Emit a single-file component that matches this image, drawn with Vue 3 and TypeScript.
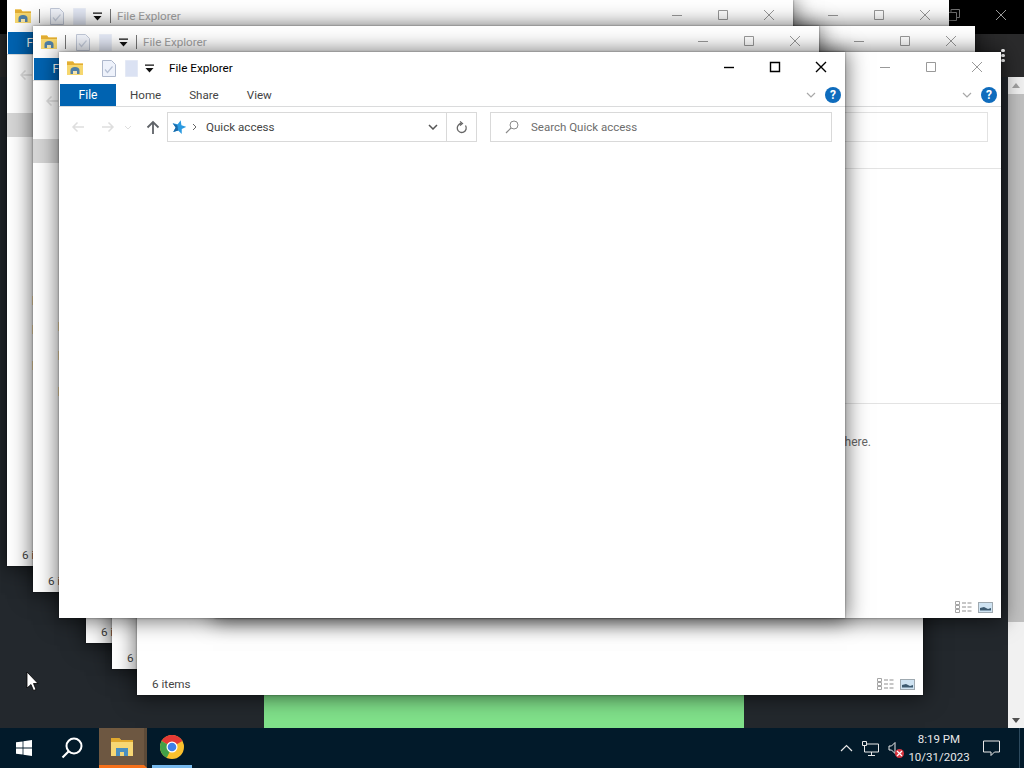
<script setup lang="ts">
type WindowBody = 'blank' | 'folders' | 'pinned'

interface ExplorerWindow {
  id: number
  x: number
  y: number
  body: WindowBody
  active?: boolean
}

// back to front, same order the cascade was opened in
const windows: ExplorerWindow[] = [
  { id: 1, x: 86, y: 77, body: 'blank' },
  { id: 2, x: 112, y: 103, body: 'blank' },
  { id: 3, x: 137, y: 129, body: 'blank' },
  { id: 4, x: 163, y: 0, body: 'pinned' },
  { id: 5, x: 189, y: 26, body: 'pinned' },
  { id: 6, x: 215, y: 52, body: 'pinned' },
  { id: 7, x: 7, y: 0, body: 'folders' },
  { id: 8, x: 33, y: 26, body: 'folders' },
  { id: 9, x: 59, y: 52, body: 'blank', active: true }
]

const tabs = ['Home', 'Share', 'View']
const folderRows = ['Desktop', 'Downloads', 'Documents']
</script>

<template>
  <div class="desktop">
    <div class="browser">
      <div class="browser-tabs">
        <svg class="browser-btn" width="14" height="14" viewBox="0 0 14 14">
          <path d="M1.5 4.5h8v8h-8zM4 4.5V1.5h8.5v8h-3" fill="none" stroke="#8a8a8a" />
        </svg>
        <svg class="browser-btn browser-close" width="14" height="14" viewBox="0 0 14 14">
          <path d="M2 2l10 10M12 2L2 12" fill="none" stroke="#9a9a9a" />
        </svg>
      </div>
      <div class="browser-toolbar">
        <div class="kebab"><i></i><i></i><i></i></div>
      </div>
      <div class="browser-page">
        <div class="green-block"></div>
        <div class="scrollbar">
          <span class="scroll-up"></span>
          <span class="scroll-thumb"></span>
          <span class="scroll-down"></span>
        </div>
      </div>
    </div>

    <!-- explorer windows -->
    <div
      v-for="win in windows"
      :key="win.id"
      class="window"
      :class="{ 'window-active': win.active }"
      :style="{ left: win.x + 'px', top: win.y + 'px' }"
    >
      <div class="titlebar">
        <svg class="home-folder" width="16" height="16" viewBox="0 0 16 16">
          <path d="M0 1.5h6l1.5 2H16V15H0z" fill="#f6d76f" />
          <path d="M0 1.5h6l1.5 2H16v1.5H0z" fill="#e3ae33" />
          <path d="M3.5 14V10.5a4.5 3.5 0 0 1 9 0V14h-2.5v-3h-4v3z" fill="#4f7fa6" />
          <path d="M6 11h4v3H6z" fill="#f3e3ae" />
        </svg>
        <span class="qa-sep qa-sep-first"></span>
        <svg class="qa-doc" width="14" height="17" viewBox="0 0 14 17">
          <path d="M.5.5h9l4 4v12H.5z" fill="#eef2fb" stroke="#aeb8cc" />
          <path d="M3 9.5l2.5 3 5-6" fill="none" stroke="#b6c0d4" stroke-width="1.2" />
        </svg>
        <svg class="qa-page" width="13" height="17" viewBox="0 0 13 17">
          <path d="M.5.5h12v16H.5z" fill="#dbe2f3" stroke="#e4e9f5" />
        </svg>
        <svg class="qa-drop" width="9" height="9" viewBox="0 0 9 9">
          <path d="M0 .5h9v1.2H0zM.5 4h8L4.5 8.5z" fill="#111" />
        </svg>
        <span class="qa-sep qa-sep-last"></span>
        <span class="title">File Explorer</span>
        <div class="controls">
          <span class="control">
            <svg width="12" height="12" viewBox="0 0 12 12"><path d="M1 6.5h10" /></svg>
          </span>
          <span class="control">
            <svg width="12" height="12" viewBox="0 0 12 12"><path d="M1.5 1.5h9v9h-9z" /></svg>
          </span>
          <span class="control">
            <svg width="12" height="12" viewBox="0 0 12 12"><path d="M1 1l10 10M11 1L1 11" /></svg>
          </span>
        </div>
      </div>

      <div class="ribbon">
        <span class="tab-file">File</span>
        <span v-for="tab in tabs" :key="tab" class="tab">{{ tab }}</span>
        <svg class="ribbon-chevron" width="10" height="6" viewBox="0 0 10 6">
          <path d="M1 1l4 4 4-4" fill="none" stroke="#a8a8a8" stroke-width="1.2" />
        </svg>
        <span class="help">?</span>
      </div>

      <div class="navbar">
        <svg class="nav-btn nav-back" width="14" height="12" viewBox="0 0 14 12">
          <path d="M13 6H2M6.5 1.5L2 6l4.5 4.5" fill="none" stroke="#dedede" stroke-width="1.5" />
        </svg>
        <svg class="nav-btn nav-forward" width="14" height="12" viewBox="0 0 14 12">
          <path d="M1 6h11M7.5 1.5L12 6l-4.5 4.5" fill="none" stroke="#dedede" stroke-width="1.5" />
        </svg>
        <svg class="nav-btn nav-caret" width="8" height="5" viewBox="0 0 8 5">
          <path d="M1 1l3 3 3-3" fill="none" stroke="#dedede" />
        </svg>
        <svg class="nav-btn nav-up" width="14" height="14" viewBox="0 0 14 14">
          <path d="M7 14V2M1.5 7.5L7 2l5.5 5.5" fill="none" stroke="#5f6368" stroke-width="1.8" />
        </svg>
        <div class="address">
          <svg class="star" width="14" height="14" viewBox="0 0 16 16">
            <g transform="rotate(14 8 8)">
              <path d="M8 0l2.200 5.300 5.800.4-4.400 3.700 1.400 5.600L8 12l-5 3 1.400-5.600L0 5.700l5.800-.4z" fill="#2b9ae0" />
              <path d="M8 12l-5 3 1.400-5.600L0 5.700l5.800 1z" fill="#1b6aa8" />
            </g>
          </svg>
          <svg class="crumb" width="5" height="8" viewBox="0 0 5 8">
            <path d="M1 1l3 3-3 3" fill="none" stroke="#666" />
          </svg>
          <span class="address-text">Quick access</span>
          <svg class="address-drop" width="10" height="6" viewBox="0 0 10 6">
            <path d="M1 1l4 4 4-4" fill="none" stroke="#555" stroke-width="1.5" />
          </svg>
        </div>
        <div class="refresh">
          <svg width="12" height="13" viewBox="0 0 12 13">
            <path d="M9.500 4.500A4.500 4.500 0 1 1 5.500 2.500" fill="none" stroke="#666" stroke-width="1.300" />
            <path d="M4 .5L6.500 2.500 4 4.500" fill="none" stroke="#666" stroke-width="1.200" />
          </svg>
        </div>
        <div class="search">
          <svg width="14" height="14" viewBox="0 0 14 14">
            <circle cx="9" cy="5" r="4" fill="none" stroke="#8a8a8a" />
            <path d="M6 8l-5 5" stroke="#8a8a8a" stroke-width="1.200" />
          </svg>
          <span class="search-text">Search Quick access</span>
        </div>
      </div>

      <div class="body">
        <template v-if="win.body === 'folders'">
          <div class="grey-row"></div>
          <div class="folder-list">
            <span v-for="row in folderRows" :key="row" class="folder-row">{{ row }}</span>
          </div>
        </template>
        <template v-else-if="win.body === 'pinned'">
          <div class="rule rule-top"></div>
          <div class="rule rule-bottom"></div>
          <p class="pinned-note">After you've pinned some folders, we'll show the most recent ones here.</p>
        </template>
      </div>

      <!-- the focused window has not painted its status bar yet -->
      <div class="statusbar">
        <template v-if="!win.active">
          <span class="status-text">6 items</span>
          <svg class="status-details" width="17" height="12" viewBox="0 0 17 12">
            <path d="M.5.5h4v3h-4zM.5 4.500h4v3h-4zM.5 8.500h4v3h-4z" fill="#fff" stroke="#a5a5a5" />
            <path d="M7 2h4M12.500 2h4M7 6h4M12.500 6h4M7 10h4M12.500 10h4" stroke="#8f8f8f" />
          </svg>
          <svg class="status-thumbs" width="15" height="11" viewBox="0 0 15 11">
            <rect x=".5" y=".5" width="14" height="10" fill="#cfe3f2" stroke="#9fa9b0" />
            <path d="M2 8.500V6l4-1 4 2 3-1v2.500z" fill="#3d5a70" />
          </svg>
        </template>
      </div>
    </div>

    <!-- mouse pointer -->
    <svg class="pointer" width="13" height="21" viewBox="0 0 13 21">
      <path d="M1 1v16l4-3.500 2.500 6 2.500-1-2.500-6H12z" fill="#fff" stroke="#000" stroke-width=".8" />
    </svg>

    <div class="taskbar">
      <div class="task-start">
        <svg width="16" height="16" viewBox="0 0 16 16">
          <path d="M0 2.300l6.600-.9v6.200H0zM7.400 1.300L16 0v7.600H7.400zM0 8.400h6.600v6.200L0 13.700zM7.400 8.400H16V16l-8.600-1.300z" fill="#fff" />
        </svg>
      </div>
      <div class="task-search">
        <svg width="22" height="22" viewBox="0 0 22 22">
          <circle cx="13" cy="9" r="7.500" fill="none" stroke="#fff" stroke-width="2" />
          <path d="M7.500 14.500L1.500 20.500" stroke="#fff" stroke-width="2.200" />
        </svg>
      </div>
      <div class="task-app task-explorer">
        <svg width="22" height="18" viewBox="0 0 22 18">
          <path d="M0 0h8l2 2h12v16H0z" fill="#f7d774" />
          <path d="M0 0h8l2 2h12v2H0z" fill="#e2a92e" />
          <path d="M5 10h12v8H5z" fill="#4a8fc0" />
          <path d="M9 14h4v4H9z" fill="#f0d77c" />
        </svg>
      </div>
      <div class="task-app task-chrome">
        <svg width="24" height="24" viewBox="0 0 24 24">
          <circle cx="12" cy="12" r="12" fill="#fbc02d" />
          <path d="M12 12L1.600 6A12 12 0 0 1 22.400 6z" fill="#e53935" />
          <path d="M12 12l-5.200 10.800A12 12 0 0 1 1.600 6z" fill="#43a047" />
          <circle cx="12" cy="12" r="5.500" fill="#fff" />
          <circle cx="12" cy="12" r="4.300" fill="#3f7fe8" />
        </svg>
      </div>

      <div class="tray">
        <svg class="tray-caret" width="13" height="8" viewBox="0 0 13 8">
          <path d="M1 7l5.500-5.500L12 7" fill="none" stroke="#e8e8e8" stroke-width="1.200" />
        </svg>
        <svg class="tray-net" width="17" height="15" viewBox="0 0 17 15">
          <path d="M2.500 3H16.500V11H2.500M9.500 11v3M6 14.500h7" fill="none" stroke="#e8e8e8" />
          <path d="M.5.500h4v4h-4z" fill="#041b2b" stroke="#e8e8e8" />
          <path d="M2.500 5v6" stroke="#e8e8e8" />
        </svg>
        <div class="tray-volume">
          <svg width="14" height="14" viewBox="0 0 14 14">
            <path d="M1 5h2.500L7 1.500v11L3.500 9H1z" fill="none" stroke="#e8e8e8" />
          </svg>
          <span class="mute-badge">
            <svg width="7" height="7" viewBox="0 0 7 7">
              <path d="M1 1l5 5M6 1L1 6" stroke="#fff" stroke-width="1.200" />
            </svg>
          </span>
        </div>
        <div class="clock">
          <span>8:19 PM</span>
          <span>10/31/2023</span>
        </div>
        <svg class="tray-action" width="17" height="16" viewBox="0 0 17 16">
          <path d="M.5 1h16v11h-5L8 15.500V12H.5z" fill="none" stroke="#e8e8e8" />
        </svg>
        <span class="show-desktop"></span>
      </div>
    </div>
  </div>
</template>

<style>
html,
body {
  margin: 0;
  background: #22272e;
}
</style>

<style scoped>
.desktop {
  position: relative;
  width: 1024px;
  height: 768px;
  overflow: hidden;
  display: flex;
  flex-direction: column;
  font-family: Roboto, "Open Sans", sans-serif;
  font-size: 12px;
  background: #22272e;
}

/* browser behind the windows */
.browser {
  flex: 1;
  display: flex;
  flex-direction: column;
  min-height: 0;
}

.browser-tabs {
  height: 34px;
  background: #000;
  display: flex;
  align-items: center;
  justify-content: flex-end;
  padding-bottom: 5px;
  box-sizing: border-box;
}

.browser-btn {
  flex: none;
}

.browser-close {
  margin: 0 16px 0 33px;
}

.browser-toolbar {
  height: 43px;
  background: #2b2b2c;
  position: relative;
}

.kebab {
  position: absolute;
  left: 1001px;
  top: 15px;
  display: flex;
  flex-direction: column;
  gap: 2px;
}

.kebab i {
  width: 4px;
  height: 3px;
  border-radius: 2px;
  background: #fff;
}

.browser-page {
  flex: 1;
  position: relative;
  background: #23282d;
}

.green-block {
  position: absolute;
  left: 264px;
  width: 480px;
  bottom: 0;
  height: 60px;
  background: #80e18a;
}

.scrollbar {
  position: absolute;
  right: 0;
  top: 0;
  bottom: 0;
  width: 16px;
  background: #f1f1f1;
  display: flex;
  flex-direction: column;
  align-items: center;
}

.scroll-up,
.scroll-down {
  flex: none;
  width: 0;
  height: 0;
  border-left: 4px solid transparent;
  border-right: 4px solid transparent;
}

.scroll-up {
  margin: 6px 0;
  border-bottom: 5px solid #a3a3a3;
}

.scroll-thumb {
  width: 100%;
  height: 528px;
  background: #c1c1c1;
}

.scroll-down {
  margin-top: auto;
  margin-bottom: 5px;
  border-top: 5px solid #505050;
}

/* explorer window */
.window {
  position: absolute;
  width: 786px;
  height: 566px;
  background: #fff;
  display: flex;
  flex-direction: column;
  box-shadow: 0 0 2px rgba(0, 0, 0, 0.45), 0 1px 20px 2px rgba(0, 0, 0, 0.55);
  color: #a3a3a3;
}

.window-active {
  color: #000;
}

.titlebar {
  height: 32px;
  flex: none;
  display: flex;
  align-items: center;
  padding-left: 8px;
}

.home-folder {
  flex: none;
}

.qa-sep {
  width: 1px;
  height: 14px;
  margin-left: 8px;
  background: #777;
}

.window-active .qa-sep {
  visibility: hidden;
}

.window:not(.window-active) .qa-doc,
.window:not(.window-active) .qa-page {
  opacity: 0.75;
}

.qa-doc {
  margin-left: 10px;
  flex: none;
}

.qa-page {
  margin-left: 9px;
  flex: none;
}

.qa-drop {
  margin-left: 7px;
  flex: none;
}

.title {
  margin-left: 6px;
  white-space: nowrap;
  font-size: 11.7px;
}

.controls {
  margin-left: auto;
  margin-right: 1px;
  align-self: flex-start;
  display: flex;
}

.control {
  width: 46px;
  height: 30px;
  display: flex;
  align-items: center;
  justify-content: center;
}

.control path {
  fill: none;
  stroke: #999;
}

.window-active .control path {
  stroke: #000;
  stroke-width: 1.4;
}

.ribbon {
  height: 23px;
  flex: none;
  box-sizing: border-box;
  border-bottom: 1px solid #dadbdc;
  display: flex;
  align-items: center;
  color: #444;
  font-size: 11.6px;
}

.window:not(.window-active) .ribbon {
  color: #999;
}

.tab-file {
  align-self: stretch;
  width: 56px;
  margin-left: 1px;
  background: #0063b1;
  color: #fff;
  font-size: 12px;
  display: flex;
  align-items: center;
  justify-content: center;
}

.tab {
  padding: 0 14px;
}

.ribbon-chevron {
  margin-left: auto;
  margin-right: 9px;
}

.help {
  width: 16px;
  height: 16px;
  margin-right: 4px;
  border-radius: 50%;
  background: #0f6cbd;
  color: #fff;
  font-size: 12px;
  font-weight: 700;
  line-height: 16px;
  text-align: center;
}

.navbar {
  height: 30px;
  flex: none;
  margin-top: 5px;
  display: flex;
  align-items: center;
  color: #444;
}

.nav-btn {
  flex: none;
}

.nav-back {
  margin-left: 12px;
}

.nav-forward {
  margin-left: 16px;
}

.nav-caret {
  margin-left: 9px;
}

.nav-up {
  margin-left: 14px;
}

.address {
  margin-left: 7px;
  width: 280px;
  height: 30px;
  box-sizing: border-box;
  border: 1px solid #d9d9d9;
  display: flex;
  align-items: center;
  padding-left: 4px;
}

.window:not(.window-active) .address,
.window:not(.window-active) .refresh,
.window:not(.window-active) .search {
  border-color: #e2e2e2;
}

.crumb {
  margin-left: 6px;
}

.address-text {
  margin-left: 9px;
  font-size: 11.6px;
}

.address-drop {
  margin-left: auto;
  margin-right: 8px;
}

.refresh {
  width: 30px;
  height: 30px;
  box-sizing: border-box;
  border: 1px solid #d9d9d9;
  border-left: 0;
  display: flex;
  align-items: center;
  justify-content: center;
}

.search {
  margin-left: 13px;
  width: 342px;
  height: 30px;
  box-sizing: border-box;
  border: 1px solid #d9d9d9;
  display: flex;
  align-items: center;
  padding-left: 14px;
  color: #6d6d6d;
  font-size: 11.5px;
}

.search-text {
  margin-left: 12px;
}

.body {
  flex: 1;
  min-height: 0;
  overflow: hidden;
  display: flex;
  flex-direction: column;
}

.grey-row {
  flex: none;
  height: 24px;
  margin-top: 23px;
  background: #d6d6d6;
}

.folder-list {
  display: flex;
  flex-direction: column;
  padding-left: 25px;
  color: #333;
}

.folder-row {
  height: 14px;
  line-height: 14px;
  margin-top: 15px;
}

.folder-row:first-child {
  margin-top: 157px;
}

.folder-row:last-child {
  margin-top: 22px;
}

.rule {
  flex: none;
  height: 1px;
  background: #e3e3e3;
}

.rule-top {
  margin-top: 26px;
}

.rule-bottom {
  margin-top: 234px;
}

.pinned-note {
  margin: 31px 130px 0 0;
  text-align: right;
  color: #666;
  white-space: nowrap;
  font-size: 12px;
  line-height: 14px;
}

.statusbar {
  flex: none;
  height: 24px;
  box-sizing: border-box;
  display: flex;
  align-items: center;
  padding: 2px 8px 0 15px;
  color: #444;
  font-size: 11.7px;
}

.status-details {
  margin-left: auto;
  flex: none;
}

.status-thumbs {
  margin-left: 6px;
  flex: none;
}

.pointer {
  position: absolute;
  left: 26px;
  top: 671px;
}

/* taskbar */
.taskbar {
  height: 40px;
  flex: none;
  position: relative;
  z-index: 1;
  background: #021a2a;
  display: flex;
  align-items: center;
  color: #e8e8e8;
}

.task-start {
  width: 48px;
  display: flex;
  justify-content: center;
}

.task-search {
  width: 48px;
  display: flex;
  justify-content: center;
}

.task-app {
  align-self: stretch;
  display: flex;
  align-items: center;
  justify-content: center;
  box-sizing: border-box;
  border-bottom: 3px solid transparent;
}

.task-explorer {
  width: 48px;
  margin-left: 3px;
  background: #6d5741;
  border-right: 3px solid #5c4a38;
  border-bottom-color: #f5701a;
}

.task-chrome {
  width: 40px;
  margin-left: 5px;
  border-bottom-color: #76b9ed;
}

.tray {
  margin-left: auto;
  display: flex;
  align-items: center;
  align-self: stretch;
}

.tray-net {
  margin-left: 9px;
}

.tray-volume {
  position: relative;
  margin-left: 9px;
  width: 14px;
  height: 14px;
}

.mute-badge {
  position: absolute;
  left: 7px;
  top: 8px;
  width: 9px;
  height: 9px;
  border-radius: 50%;
  background: #d9343f;
  display: flex;
  align-items: center;
  justify-content: center;
}

.clock {
  margin-left: 7px;
  width: 60px;
  display: flex;
  flex-direction: column;
  align-items: center;
  gap: 3px;
  line-height: 15px;
  font-size: 11.5px;
}

.tray-action {
  margin-left: 14px;
}

.show-desktop {
  align-self: stretch;
  width: 1px;
  margin-left: 19px;
  margin-right: 4px;
  background: #2d4a5e;
}
</style>
